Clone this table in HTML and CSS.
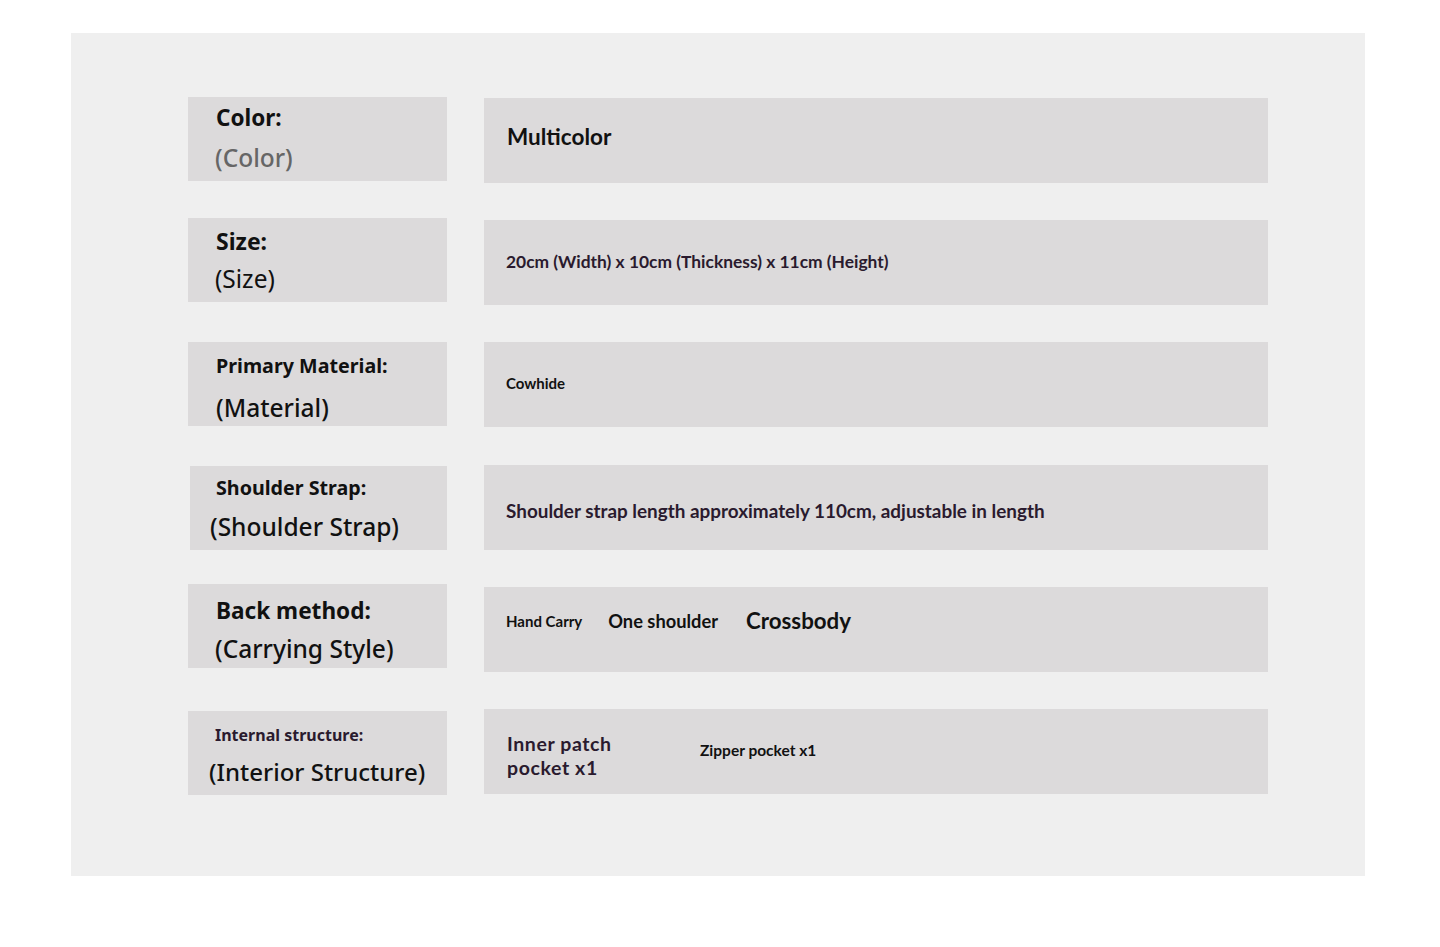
FILE: index.html
```html
<!DOCTYPE html>
<html lang="en">
<head>
<meta charset="utf-8">
<title>Product specifications</title>
<link rel="stylesheet" href="styles.css">
</head>
<body>
<div class="panel">
  <div class="rows">
    <div class="row r1">
      <div class="label"><span class="k k-color">Color:</span><span class="t t-gray">(Color)</span></div>
      <div class="value"><span class="v v-multi">Multicolor</span></div>
    </div>
    <div class="row r2">
      <div class="label"><span class="k k-size">Size:</span><span class="t t-size">(Size)</span></div>
      <div class="value"><span class="v v-dim">20cm (Width) x 10cm (Thickness) x 11cm (Height)</span></div>
    </div>
    <div class="row r3">
      <div class="label"><span class="k k-mat">Primary Material:</span><span class="t t-mat">(Material)</span></div>
      <div class="value"><span class="v v-cow">Cowhide</span></div>
    </div>
    <div class="row r4">
      <div class="label label-strap"><span class="k k-strap">Shoulder Strap:</span><span class="t t-strap">(Shoulder Strap)</span></div>
      <div class="value"><span class="v v-strap">Shoulder strap length approximately 110cm, adjustable in length</span></div>
    </div>
    <div class="row r5">
      <div class="label"><span class="k k-back">Back method:</span><span class="t t-back">(Carrying Style)</span></div>
      <div class="value value-carry"><span class="v v-hand">Hand Carry</span><span class="v v-one">One shoulder</span><span class="v v-cross">Crossbody</span></div>
    </div>
    <div class="row r6">
      <div class="label"><span class="k k-int">Internal structure:</span><span class="t t-int">(Interior Structure)</span></div>
      <div class="value value-int">
        <div class="v v-inner"><span class="inner-line">Inner patch</span><span class="inner-line">pocket x1</span></div>
        <span class="v v-zip">Zipper pocket x1</span>
      </div>
    </div>
  </div>
</div>
</body>
</html>
```

FILE: styles.css
```css
html, body {
  margin: 0;
  padding: 0;
  background: #ffffff;
}
body {
  width: 1440px;
  height: 947px;
  font-family: "Noto Sans", "Open Sans", sans-serif;
  padding-top: 33px;
  box-sizing: border-box;
}
.panel {
  margin-left: 71px;
  width: 1294px;
  height: 843px;
  background: #efefef;
  box-sizing: border-box;
  padding: 64px 0 0 117px;
}
.rows {
  display: flex;
  flex-direction: column;
}
.row {
  display: flex;
  align-items: flex-start;
  gap: 37px;
  height: 88px;
}
.r2 { margin-top: 33px; }
.r3 { margin-top: 36px; }
.r4 { margin-top: 35px; }
.r5 { margin-top: 31px; }
.r6 { margin-top: 37px; }
.r1 .value { margin-top: 1px; }
.r2 .value { margin-top: 2px; }
.r4 .label { margin-top: 1px; }
.r5 .value { margin-top: 3px; }
.r6 .label { margin-top: 2px; }

.label {
  width: 259px;
  height: 84px;
  background: #dcdadb;
  box-sizing: border-box;
  padding-left: 28px;
  display: flex;
  flex-direction: column;
  justify-content: center;
  color: #111111;
}
.label-strap {
  width: 257px;
  margin-left: 2px;
  padding-left: 26px;
}
.value {
  width: 784px;
  height: 85px;
  background: #dcdadb;
  box-sizing: border-box;
  padding-left: 22px;
  display: flex;
  align-items: center;
  color: #111111;
}
.k {
  font-weight: 700;
  display: block;
}
.t {
  display: block;
  font-weight: 500;
}
.k-color { font-size: 22.5px; line-height: 40px; margin-top: -2px; }
.t-gray { font-size: 24.5px; line-height: 40px; color: #666666; margin-left: -1px; }
.k-size { font-size: 23px; line-height: 38px; margin-top: 0; }
.t-size { font-size: 24.5px; line-height: 38px; margin-left: -1px; font-weight: 400; }
.k-mat { font-size: 19.7px; line-height: 42px; margin-top: 6px; }
.t-mat { font-size: 24.5px; line-height: 42px; }
.k-strap { font-size: 19.7px; line-height: 38px; }
.t-strap { font-size: 24.5px; line-height: 40px; margin-left: -6px; }
.k-back { font-size: 22.6px; line-height: 38px; margin-top: 8px; }
.t-back { font-size: 24.5px; line-height: 38px; margin-left: -1px; }
.k-int { font-size: 16px; line-height: 36px; color: #2a1a2e; margin-left: -1px; margin-top: 2px; }
.t-int { font-size: 24px; line-height: 38px; margin-left: -7px; }

.v {
  font-family: "Lato", "Liberation Sans", sans-serif;
  font-weight: 700;
}
.v-multi { font-size: 22.5px; margin-top: -8px; margin-left: 1px; }
.v-dim { font-size: 17.4px; color: #2a1a2e; margin-top: -2px; }
.v-cow { font-size: 15px; margin-top: -4px; }
.v-strap { font-size: 18.9px; color: #2a1a2e; margin-top: 6px; }
.value-carry { padding-bottom: 18px; }
.v-hand { font-size: 15px; }
.v-one { font-size: 18.3px; margin-left: 26px; }
.v-cross { font-size: 22.3px; margin-left: 28px; }
.value-int { padding-top: 8px; }
.v-inner {
  display: flex;
  flex-direction: column;
  font-size: 19.5px;
  line-height: 24px;
  letter-spacing: 0.6px;
  color: #2a1a2e;
  width: 193px;
  margin-left: 1px;
}
.inner-line { display: block; height: 24px; }
.v-zip { font-size: 15.5px; color: #111111; margin-top: -12px; }
```
